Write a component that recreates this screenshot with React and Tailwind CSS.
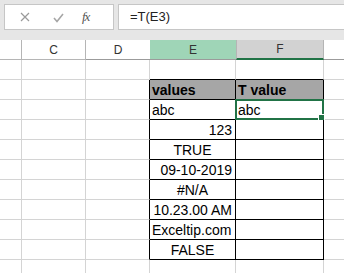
import React from 'react';

const rows = [
  {},
  { e: 'values', f: 'T value', head: true },
  { e: 'abc', ea: 'left', f: 'abc', sel: true },
  { e: '123', ea: 'right' },
  { e: 'TRUE', ea: 'center' },
  { e: '09-10-2019', ea: 'right' },
  { e: '#N/A', ea: 'center' },
  { e: '10.23.00 AM', ea: 'right' },
  { e: 'Exceltip.com', ea: 'left' },
  { e: 'FALSE', ea: 'center' },
  {},
];

const align = {
  left: 'justify-start pl-[2px]',
  right: 'justify-end pr-[3px]',
  center: 'justify-center',
};

const App = () => {
  return (
    <div className="w-[344px] h-[273px] overflow-hidden bg-white font-['Liberation_Sans',Arial,sans-serif]">
      {/* formula bar */}
      <div className="h-10 bg-[#e6e6e6] flex items-start pt-1 pl-1 gap-1">
        <div className="w-[110px] h-[26px] bg-white border border-[#c6c6c6] flex items-center">
          <svg width="10" height="10" viewBox="0 0 10 10" className="ml-[15px]">
            <path d="M1 1 L9 9 M9 1 L1 9" stroke="#9a9a9a" strokeWidth="1.2" fill="none" />
          </svg>
          <svg width="11" height="10" viewBox="0 0 11 10" className="ml-[23px] mt-[2px]">
            <path d="M1 5 L4 8.5 L10 1" stroke="#a6a6a6" strokeWidth="1.6" fill="none" />
          </svg>
          <span className="ml-[18px] text-[13px] italic text-[#555] font-['Liberation_Serif',serif] tracking-[-1px]">fx</span>
        </div>
        <div className="flex-1 h-[26px] bg-white border border-[#c6c6c6] border-r-0 flex items-center pl-[11px] text-[13px] text-[#222]">
          =T(E3)
        </div>
      </div>

      {/* column headers */}
      <div className="flex h-5 text-[12px] text-[#333]">
        <div className="w-[22px] border-r border-b border-[#b5b5b5]"></div>
        <div className="w-16 border-r border-b border-[#b5b5b5] flex items-center justify-center">C</div>
        <div className="w-16 border-b border-[#9b9b9b] flex items-center justify-center">D</div>
        <div className="w-[86px] bg-[#9fd5b7] border-b border-[#9b9b9b] flex items-center justify-center">E</div>
        <div className="w-[88px] bg-[#d2d2d2] border-l border-r border-l-[#b5b5b5] border-r-[#b5b5b5] border-b-2 border-b-[#217346] flex items-center justify-center">F</div>
        <div className="flex-1 border-b border-[#9b9b9b]"></div>
      </div>

      {/* grid rows */}
      {rows.map((r, i) => {
        const inTable = i >= 1 && i <= 9;
        const topEdge = i === 0;
        return (
          <div key={i} className="flex h-5 text-[14px] leading-[17px] text-black">
            <div className="w-[22px] border-r border-b border-[#d4d4d4]"></div>
            <div className="w-16 border-r border-b border-[#d4d4d4]"></div>
            <div className={inTable ? 'w-16 border-b border-r border-b-[#d4d4d4] border-r-black' : 'w-16 border-r border-b border-[#d4d4d4]'}></div>
            <div
              className={
                (inTable || topEdge ? 'border-b-black ' : 'border-b-[#d4d4d4] ') +
                (inTable ? 'border-r-black ' : 'border-r-[#d4d4d4] ') +
                (r.head ? 'bg-[#a6a6a6] font-bold ' : '') +
                'w-[86px] border-r border-b flex items-end whitespace-nowrap ' +
                (r.head ? align.left : align[r.ea] || '')
              }
            >
              {r.e}
            </div>
            <div
              className={
                (inTable || topEdge ? 'border-b-black ' : 'border-b-[#d4d4d4] ') +
                (inTable ? 'border-r-black ' : 'border-r-[#d4d4d4] ') +
                (r.head ? 'bg-[#a6a6a6] font-bold ' : '') +
                'relative w-[88px] border-r border-b flex items-end pl-[2px] whitespace-nowrap'
              }
            >
              {r.f}
              {r.sel && (
                <div className="absolute -top-px -left-px -right-px -bottom-px border-2 border-[#217346]">
                  <div className="absolute -right-[3px] -bottom-[3px] w-[5px] h-[5px] bg-[#217346] border border-white box-content"></div>
                </div>
              )}
            </div>
            <div className="flex-1 border-b border-[#d4d4d4]"></div>
          </div>
        );
      })}
    </div>
  );
};

export default App;
